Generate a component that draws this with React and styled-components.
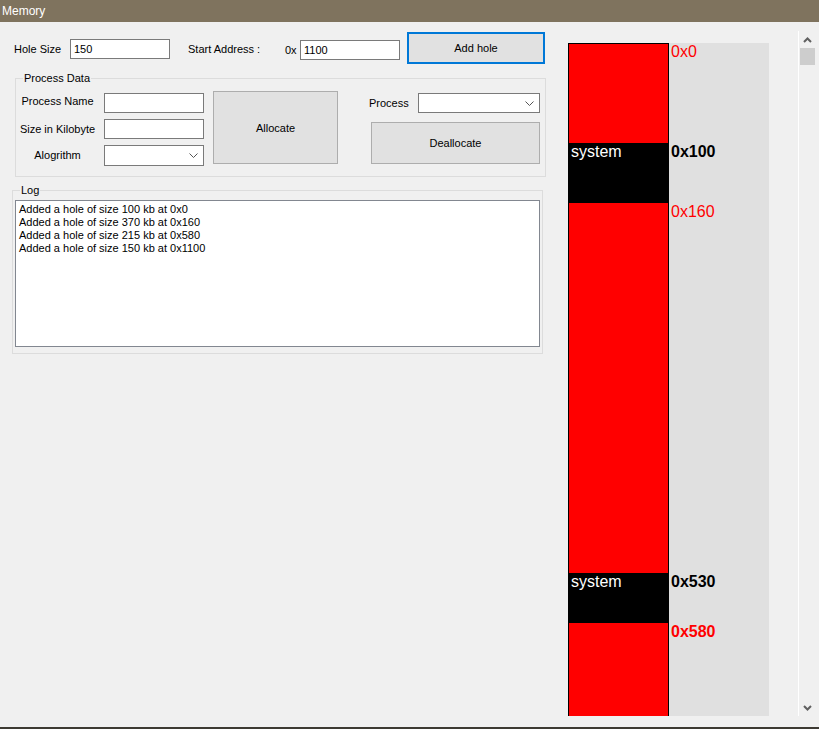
import React from "react";
import styled, { createGlobalStyle } from "styled-components";

const Global = createGlobalStyle`
  html, body { margin: 0; padding: 0; background: #f0f0f0; }
  body { font-family: "Liberation Sans", Arial, sans-serif; font-size: 11px; color: #000; }
  * { box-sizing: border-box; }
`;

const Window = styled.div`
  width: 819px;
  height: 729px;
  display: flex;
  flex-direction: column;
  background: #f0f0f0;
  overflow: hidden;
`;

const TitleBar = styled.div`
  height: 22px;
  flex: none;
  background: #7f735e;
  color: #fff;
  font-size: 12px;
  line-height: 22px;
  padding-left: 2px;
`;

const Body = styled.div`
  flex: 1;
  display: flex;
  min-height: 0;
`;

const BottomEdge = styled.div`
  height: 2px;
  flex: none;
  background: #3d3a33;
`;

const LeftPanel = styled.div`
  width: 555px;
  flex: none;
  display: flex;
  flex-direction: column;
`;

const TopRow = styled.div`
  margin-top: 10px;
  height: 32px;
  display: flex;
  align-items: center;
  padding-left: 14px;
`;

const Label = styled.span`
  width: ${(p) => p.$w}px;
  flex: none;
  white-space: nowrap;
  margin-top: ${(p) => p.$dy || 0}px;
`;

const TextBox = styled.div`
  width: ${(p) => p.$w || 100}px;
  height: ${(p) => p.$h || 20}px;
  flex: none;
  background: #fff;
  border: 1px solid #7a7a7a;
  padding: 0 3px;
  line-height: 18px;
  margin-top: ${(p) => p.$dy || 0}px;
`;

const Combo = styled.div`
  width: ${(p) => p.$w || 100}px;
  height: ${(p) => p.$h || 20}px;
  flex: none;
  background: #fff;
  border: 1px solid #7a7a7a;
  display: flex;
  align-items: center;
  justify-content: flex-end;
  padding-right: 5px;
`;

const Button = styled.div`
  width: ${(p) => p.$w}px;
  height: ${(p) => p.$h}px;
  flex: none;
  background: #e1e1e1;
  border: ${(p) => (p.$focus ? "2px solid #0078d7" : "1px solid #adadad")};
  display: flex;
  align-items: center;
  justify-content: center;
  margin-left: ${(p) => p.$ml || 0}px;
  margin-top: ${(p) => p.$mt || 0}px;
`;

const Group = styled.div`
  position: relative;
  margin-left: ${(p) => p.$ml}px;
  margin-top: ${(p) => p.$mt}px;
  width: 531px;
  height: ${(p) => p.$h}px;
  border: 1px solid #dcdcdc;
  padding: ${(p) => p.$pad};
`;

const Legend = styled.span`
  position: absolute;
  top: -8px;
  left: ${(p) => p.$left}px;
  padding: 0 1px;
  background: #f0f0f0;
  line-height: 14px;
`;

const ProcessRow = styled.div`
  display: flex;
  align-items: flex-start;
`;

const FieldGrid = styled.div`
  display: grid;
  grid-template-columns: 83px 100px;
  column-gap: 5px;
  row-gap: 6px;
  grid-auto-rows: 20px;
  align-items: center;
  margin-top: 2px;
`;

const CenterLabel = styled.span`
  text-align: center;
  white-space: nowrap;
  margin-top: ${(p) => p.$dy || 0}px;
`;

const RightCol = styled.div`
  width: 171px;
  margin-left: 31px;
  margin-top: 2px;
  display: flex;
  flex-direction: column;
`;

const InlineRow = styled.div`
  display: flex;
  align-items: center;
  justify-content: space-between;
`;

const LogBox = styled.div`
  width: 525px;
  height: 147px;
  background: #fff;
  border: 1px solid #828790;
  padding: 2px 3px;
  line-height: 13px;
`;

const RightPanel = styled.div`
  flex: 1;
  display: flex;
  margin-top: 9px;
  height: 685px;
`;

const ScrollView = styled.div`
  flex: 1;
  overflow: hidden;
  padding: 12px 0 0 13px;
`;

const MemMap = styled.div`
  width: 201px;
  background: #e0e0e0;
  height: 800px;
`;

const Segment = styled.div`
  display: flex;
  height: ${(p) => p.$h}px;
`;

const Block = styled.div`
  width: 101px;
  flex: none;
  background: ${(p) => (p.$hole ? "#ff0000" : "#000")};
  border-left: 1px solid #000;
  border-right: 1px solid #000;
  border-top: ${(p) => (p.$first ? "1px solid #000" : "none")};
  color: #fff;
  font-size: 16px;
  line-height: 18px;
  padding-left: 2px;
`;

const Addr = styled.div`
  padding-left: 2px;
  font-size: 16px;
  line-height: 18px;
  font-weight: ${(p) => (p.$bold ? 700 : 400)};
  color: ${(p) => (p.$hole ? "#ff0000" : "#000")};
`;

const ScrollBar = styled.div`
  width: 21px;
  flex: none;
  border-left: 1px solid #fff;
  display: flex;
  flex-direction: column;
  align-items: center;
  background: #f0f0f0;
`;

const ArrowBtn = styled.div`
  width: 17px;
  height: 17px;
  flex: none;
  display: flex;
  align-items: center;
  justify-content: center;
  margin-left: -3px;
`;

const Thumb = styled.div`
  width: 15px;
  height: 17px;
  flex: none;
  background: #cdcdcd;
  margin-left: -3px;
`;

const Track = styled.div`
  flex: 1;
`;

const ChevronDown = () => (
  <svg width="9" height="5" viewBox="0 0 9 5">
    <polyline points="0.5,0.5 4.5,4.5 8.5,0.5" fill="none" stroke="#555" strokeWidth="1" />
  </svg>
);

const ScrollArrow = ({ up }) => (
  <svg width="9" height="6" viewBox="0 0 9 6">
    <polyline
      points={up ? "1,5 4.5,1.5 8,5" : "1,1 4.5,4.5 8,1"}
      fill="none"
      stroke="#606060"
      strokeWidth="2"
    />
  </svg>
);

const segments = [
  { h: 100, hole: true, addr: "0x0" },
  { h: 60, hole: false, addr: "0x100", name: "system", bold: true },
  { h: 370, hole: true, addr: "0x160" },
  { h: 50, hole: false, addr: "0x530", name: "system", bold: true },
  { h: 215, hole: true, addr: "0x580", bold: true },
];

const logLines = [
  "Added a hole of size 100 kb at 0x0",
  "Added a hole of size 370 kb at 0x160",
  "Added a hole of size 215 kb at 0x580",
  "Added a hole of size 150 kb at 0x1100",
];

export default function App() {
  return (
    <>
      <Global />
      <Window>
        <TitleBar>Memory</TitleBar>
        <Body>
          <LeftPanel>
            <TopRow>
              <Label $w={56} $dy={2}>Hole Size</Label>
              <TextBox $dy={2}>150</TextBox>
              <Label $w={18} />
              <Label $w={97} $dy={2}>Start Address :</Label>
              <Label $w={15} $dy={4}>0x</Label>
              <TextBox $dy={4}>1100</TextBox>
              <Button $w={138} $h={32} $ml={7} $focus>Add hole</Button>
            </TopRow>

            <Group $ml={15} $mt={14} $h={99} $pad="12px 0 0 0">
              <Legend $left={7}>Process Data</Legend>
              <ProcessRow>
                <FieldGrid>
                  <CenterLabel $dy={-5}>Process Name</CenterLabel>
                  <TextBox />
                  <CenterLabel>Size in Kilobyte</CenterLabel>
                  <TextBox />
                  <CenterLabel>Alogrithm</CenterLabel>
                  <Combo $h={21}><ChevronDown /></Combo>
                </FieldGrid>
                <Button $w={125} $h={73} $ml={9}>Allocate</Button>
                <RightCol>
                  <InlineRow>
                    <span>Process</span>
                    <Combo $w={122}><ChevronDown /></Combo>
                  </InlineRow>
                  <Button $w={169} $h={42} $ml={2} $mt={9}>Deallocate</Button>
                </RightCol>
              </ProcessRow>
            </Group>

            <Group $ml={12} $mt={13} $h={164} $pad="9px 0 0 2px">
              <Legend $left={7}>Log</Legend>
              <LogBox>
                {logLines.map((l) => (
                  <div key={l}>{l}</div>
                ))}
              </LogBox>
            </Group>
          </LeftPanel>

          <RightPanel>
            <ScrollView>
              <MemMap>
                {segments.map((s, i) => (
                  <Segment key={s.addr} $h={s.h}>
                    <Block $hole={s.hole} $first={i === 0}>{s.name || ""}</Block>
                    <Addr $hole={s.hole} $bold={s.bold}>{s.addr}</Addr>
                  </Segment>
                ))}
              </MemMap>
            </ScrollView>
            <ScrollBar>
              <ArrowBtn><ScrollArrow up /></ArrowBtn>
              <Thumb />
              <Track />
              <ArrowBtn><ScrollArrow /></ArrowBtn>
            </ScrollBar>
          </RightPanel>
        </Body>
        <BottomEdge />
      </Window>
    </>
  );
}
